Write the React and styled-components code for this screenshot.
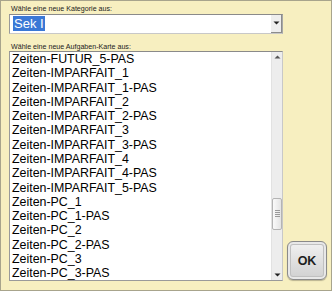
import React from "react";
import styled, { createGlobalStyle } from "styled-components";

const Global = createGlobalStyle`
  html, body { margin: 0; padding: 0; background: #f7efc0; }
  body { font-family: "Liberation Sans", Arial, sans-serif; }
  * { box-sizing: border-box; }
`;

const Frame = styled.div`
  width: 332px;
  height: 291px;
  background: #f7efc0;
  border: 1px solid #a8a48c;
  padding: 3px 0 9px 8px;
  display: grid;
  grid-template-columns: 274px 40px;
  column-gap: 4px;
`;

const Column = styled.div`
  display: flex;
  flex-direction: column;
  min-height: 0;
`;

const Label = styled.div`
  font-size: 7.1px;
  line-height: ${(p) => p.$lh || 9}px;
  margin-top: ${(p) => p.$mt || 0}px;
  padding-left: 2px;
  color: #222;
  white-space: nowrap;
`;

const Select = styled.div`
  height: 20px;
  background: #fff;
  border-top: 1px solid #8a8a8a;
  border-left: 1px solid #9a9a9a;
  border-right: 1px solid #a8a8a8;
  border-bottom: 1px solid #c8c8c8;
  display: flex;
  align-items: stretch;
`;

const SelectValue = styled.div`
  flex: 1;
  display: flex;
  align-items: center;
  padding-left: 3px;
`;

const Highlight = styled.span`
  background: #3a78d6;
  color: #fff;
  font-size: 13px;
  line-height: 15px;
  padding: 0 1px;
`;

const ArrowBox = styled.div`
  width: 11px;
  background: #eeeeee;
  border-right: 1px solid #8c8c8c;
  border-bottom: 1px solid #8c8c8c;
  display: flex;
  align-items: center;
  justify-content: center;
`;

const List = styled.div`
  height: 231px;
  background: #fff;
  border-top: 1px solid #8a8a8a;
  border-left: 1px solid #9a9a9a;
  border-bottom: 1px solid #9a9a9a;
  border-right: 1px solid #c8c8c8;
  display: flex;
  overflow: hidden;
`;

const Rows = styled.div`
  flex: 1;
  overflow: hidden;
  padding-left: 2px;
`;

const Row = styled.div`
  font-size: 12.4px;
  line-height: 14.3px;
  color: #000;
  white-space: nowrap;
`;

const ScrollBar = styled.div`
  width: 11px;
  background: #ededed;
  border-left: 1px solid #e2e2e2;
  display: flex;
  flex-direction: column;
  align-items: center;
`;

const ScrollArrow = styled.div`
  height: 11px;
  width: 100%;
  display: flex;
  align-items: center;
  justify-content: center;
`;

const Track = styled.div`
  flex: 1;
  width: 100%;
  display: flex;
  flex-direction: column;
  padding-top: ${(p) => p.$offset}px;
`;

const Thumb = styled.div`
  height: 32px;
  width: 10px;
  border: 1px solid #b4b4b4;
  border-radius: 2px;
  background: linear-gradient(to right, #fafafa, #e4e4e4);
  display: flex;
  flex-direction: column;
  align-items: center;
  justify-content: center;
  gap: 1px;
`;

const Grip = styled.div`
  width: 5px;
  height: 1px;
  background: #9a9a9a;
`;

const OkButton = styled.button`
  align-self: end;
  width: 40px;
  height: 39px;
  margin-bottom: 1px;
  border: 1px solid #8a8a8a;
  border-radius: 6px;
  background: linear-gradient(#f2f2f2, #d0d0d0);
  box-shadow: inset 0 0 0 2px #e8e8e8, inset 0 0 0 3px #c0c0c0,
    0 1px 1px rgba(0, 0, 0, 0.25);
  font-family: "Liberation Sans", Arial, sans-serif;
  font-weight: bold;
  font-size: 12.5px;
  color: #1e1e1e;
  padding: 0;
  cursor: pointer;
`;

const Tri = ({ down }) => (
  <svg width="7" height="4" viewBox="0 0 7 4">
    {down ? (
      <path d="M0.5 0.5 L6.5 0.5 L3.5 3.5 Z" fill="#222" />
    ) : (
      <path d="M0.5 3.5 L6.5 3.5 L3.5 0.5 Z" fill="#555" />
    )}
  </svg>
);

const items = [
  "Zeiten-FUTUR_5-PAS",
  "Zeiten-IMPARFAIT_1",
  "Zeiten-IMPARFAIT_1-PAS",
  "Zeiten-IMPARFAIT_2",
  "Zeiten-IMPARFAIT_2-PAS",
  "Zeiten-IMPARFAIT_3",
  "Zeiten-IMPARFAIT_3-PAS",
  "Zeiten-IMPARFAIT_4",
  "Zeiten-IMPARFAIT_4-PAS",
  "Zeiten-IMPARFAIT_5-PAS",
  "Zeiten-PC_1",
  "Zeiten-PC_1-PAS",
  "Zeiten-PC_2",
  "Zeiten-PC_2-PAS",
  "Zeiten-PC_3",
  "Zeiten-PC_3-PAS",
];

export default function App() {
  return (
    <>
      <Global />
      <Frame>
        <Column>
          <Label $lh={10}>Wähle eine neue Kategorie aus:</Label>
          <Select>
            <SelectValue>
              <Highlight>Sek I</Highlight>
            </SelectValue>
            <ArrowBox>
              <Tri down />
            </ArrowBox>
          </Select>
          <Label $mt={9} $lh={8}>Wähle eine neue Aufgaben-Karte aus:</Label>
          <List>
            <Rows>
              {items.map((t) => (
                <Row key={t}>{t}</Row>
              ))}
            </Rows>
            <ScrollBar>
              <ScrollArrow>
                <Tri />
              </ScrollArrow>
              <Track $offset={135}>
                <Thumb>
                  <Grip />
                  <Grip />
                  <Grip />
                  <Grip />
                </Thumb>
              </Track>
              <ScrollArrow>
                <Tri down />
              </ScrollArrow>
            </ScrollBar>
          </List>
        </Column>
        <OkButton>OK</OkButton>
      </Frame>
    </>
  );
}
